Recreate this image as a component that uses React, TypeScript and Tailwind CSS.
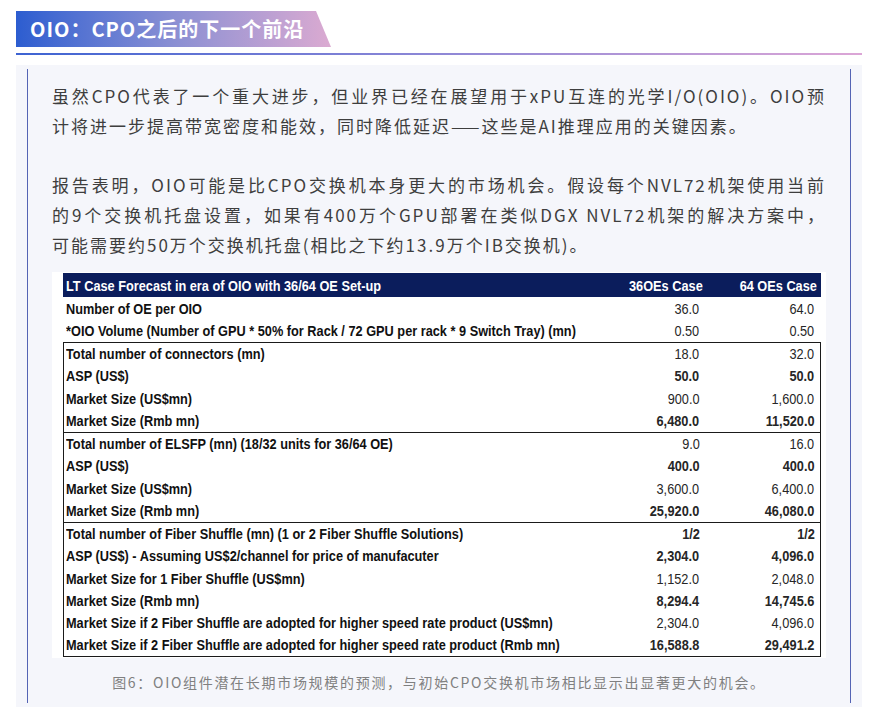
import clsx from "clsx";

type Row = { label: string; a: string; b: string; bold?: boolean };

const topRows: Row[] = [
  { label: "Number of OE per OIO", a: "36.0", b: "64.0" },
  {
    label:
      "*OIO Volume (Number of GPU * 50% for Rack / 72 GPU per rack * 9 Switch Tray) (mn)",
    a: "0.50",
    b: "0.50",
  },
];

const groups: Row[][] = [
  [
    { label: "Total number of connectors (mn)", a: "18.0", b: "32.0" },
    { label: "ASP (US$)", a: "50.0", b: "50.0", bold: true },
    { label: "Market Size (US$mn)", a: "900.0", b: "1,600.0" },
    { label: "Market Size (Rmb mn)", a: "6,480.0", b: "11,520.0", bold: true },
  ],
  [
    { label: "Total number of ELSFP (mn) (18/32 units for 36/64 OE)", a: "9.0", b: "16.0" },
    { label: "ASP (US$)", a: "400.0", b: "400.0", bold: true },
    { label: "Market Size (US$mn)", a: "3,600.0", b: "6,400.0" },
    { label: "Market Size (Rmb mn)", a: "25,920.0", b: "46,080.0", bold: true },
  ],
  [
    {
      label: "Total number of Fiber Shuffle (mn) (1 or 2 Fiber Shuffle Solutions)",
      a: "1/2",
      b: "1/2",
      bold: true,
    },
    {
      label: "ASP (US$) - Assuming US$2/channel for price of manufacuter",
      a: "2,304.0",
      b: "4,096.0",
      bold: true,
    },
    { label: "Market Size for 1 Fiber Shuffle (US$mn)", a: "1,152.0", b: "2,048.0" },
    { label: "Market Size (Rmb mn)", a: "8,294.4", b: "14,745.6", bold: true },
    {
      label:
        "Market Size if 2 Fiber Shuffle are adopted for higher speed rate product (US$mn)",
      a: "2,304.0",
      b: "4,096.0",
    },
    {
      label:
        "Market Size if 2 Fiber Shuffle are adopted for higher speed rate product (Rmb mn)",
      a: "16,588.8",
      b: "29,491.2",
      bold: true,
    },
  ],
];

// the source table is a horizontally squeezed Arial, so the text is narrowed
function Narrow({ children, right }: { children: string; right?: boolean }) {
  return (
    <span
      className={clsx(
        "inline-block whitespace-nowrap scale-x-[0.85]",
        right ? "origin-right" : "origin-left"
      )}
    >
      {children}
    </span>
  );
}

function TableRow({ row }: { row: Row }) {
  return (
    <div className="flex h-[22.25px] items-center">
      <div className="min-w-0 flex-1 pl-[1.5px] font-bold text-[#111]">
        <Narrow>{row.label}</Narrow>
      </div>
      <div
        className={clsx(
          "w-[120px] pr-[4px] text-right text-[#262626]",
          row.bold && "font-bold text-[#111]"
        )}
      >
        <Narrow right>{row.a}</Narrow>
      </div>
      <div
        className={clsx(
          "w-[116.5px] pr-[5.5px] text-right text-[#262626]",
          row.bold && "font-bold text-[#111]"
        )}
      >
        <Narrow right>{row.b}</Narrow>
      </div>
    </div>
  );
}

function Line({ text, last }: { text: string; last?: boolean }) {
  return (
    <div
      className={clsx(
        "whitespace-nowrap",
        !last && "[text-align-last:justify]"
      )}
    >
      {text}
    </div>
  );
}

export default function App() {
  return (
    <main className="min-h-screen bg-white pl-4 pr-2 pt-[11px] font-['Noto_Sans_CJK_SC',sans-serif]">
      {/* TITLE */}

      <h2 className="flex h-[36px] w-[315px] items-center bg-linear-to-r from-[#2c5dd0] via-[#8a8fd3] to-[#dbaad1] pl-[14px] text-[20px] font-bold tracking-[1px] text-white [clip-path:polygon(0_0,calc(100%_-_15px)_0,100%_100%,0_100%)]">
        OIO：CPO之后的下一个前沿
      </h2>

      <div className="mt-[6px] h-[2px] bg-linear-to-r from-[#3d63d2] to-[#dca6d6]" />

      {/* QUOTE BLOCK */}

      <section className="mt-[10px] bg-[#f5f6fb] px-[11px] py-[4px]">
        <div className="border-x border-[#5464b4] px-[24px] pb-[9px] pt-[12px]">
          <div className="text-[17px] leading-[30px] tracking-[2px] text-[#3e3e3e]">
            <Line text="虽然CPO代表了一个重大进步，但业界已经在展望用于xPU互连的光学I/O(OIO)。OIO预" />
            <Line
              text="计将进一步提高带宽密度和能效，同时降低延迟——这些是AI推理应用的关键因素。"
              last
            />
          </div>

          <div className="mt-[29px] text-[17px] leading-[30px] tracking-[2px] text-[#3e3e3e]">
            <Line text="报告表明，OIO可能是比CPO交换机本身更大的市场机会。假设每个NVL72机架使用当前" />
            <Line text="的9个交换机托盘设置，如果有400万个GPU部署在类似DGX NVL72机架的解决方案中，" />
            <Line text="可能需要约50万个交换机托盘(相比之下约13.9万个IB交换机)。" last />
          </div>

          {/* TABLE */}

          <div className="mt-[12px] bg-white pb-px pl-[11px] pr-[5px] pt-px font-['Liberation_Sans',Arial,sans-serif] text-[15px] leading-none">
            <div className="flex h-[24px] items-center bg-[#0b1d5c] font-bold text-white">
              <div className="min-w-0 flex-1 pl-[3px]">
                <Narrow>LT Case Forecast in era of OIO with 36/64 OE Set-up</Narrow>
              </div>
              <div className="w-[120px] text-right">
                <Narrow right>36OEs Case</Narrow>
              </div>
              <div className="w-[118px] pr-[4px] text-right">
                <Narrow right>64 OEs Case</Narrow>
              </div>
            </div>

            <div className="px-[1.5px]">
              {topRows.map((row) => (
                <TableRow key={row.label} row={row} />
              ))}
            </div>

            <div className="border-[1.5px] border-[#1a1a1a]">
              {groups.map((group, i) => (
                <div
                  key={i}
                  className={clsx(i > 0 && "border-t-[1.5px] border-[#1a1a1a]")}
                >
                  {group.map((row) => (
                    <TableRow key={row.label} row={row} />
                  ))}
                </div>
              ))}
            </div>
          </div>

          <p className="mt-[12px] text-center text-[14px] leading-[24px] tracking-[1.7px] text-[#808080]">
            图6：OIO组件潜在长期市场规模的预测，与初始CPO交换机市场相比显示出显著更大的机会。
          </p>
        </div>
      </section>
    </main>
  );
}
